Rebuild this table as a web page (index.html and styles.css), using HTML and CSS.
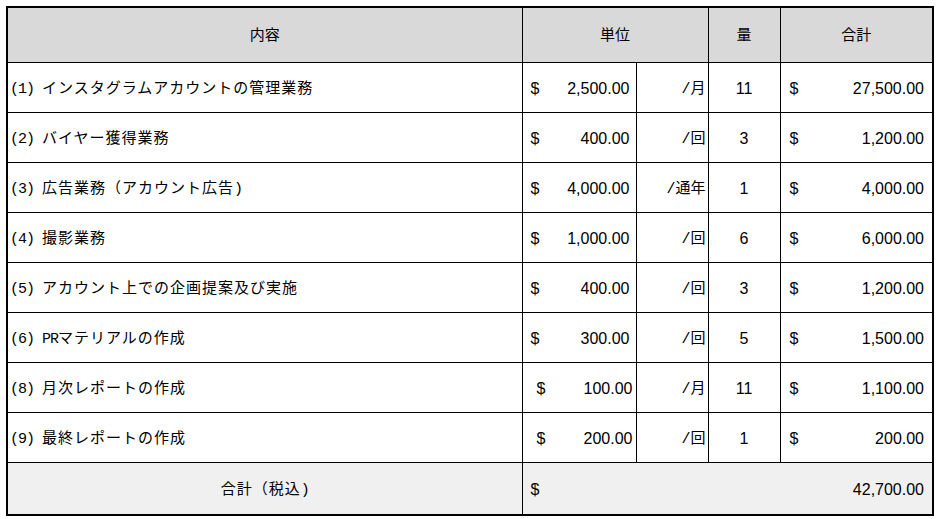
FILE: index.html
```html
<!DOCTYPE html>
<html lang="ja">
<head>
<meta charset="utf-8">
<title>見積</title>
<link rel="stylesheet" href="styles.css">
</head>
<body>
<table class="quote">
  <colgroup>
    <col class="c-item">
    <col class="c-price">
    <col class="c-unit">
    <col class="c-qty">
    <col class="c-total">
  </colgroup>
  <thead>
    <tr class="head">
      <th>内容</th>
      <th colspan="2">単位</th>
      <th>量</th>
      <th>合計</th>
    </tr>
  </thead>
  <tbody>
    <tr>
      <td class="item"><span class="no">(1) </span>インスタグラムアカウントの管理業務</td>
      <td class="money"><span class="cur">$</span><span class="val">2,500.00</span></td>
      <td class="unit"><span class="sl">/</span>月</td>
      <td class="qty">11</td>
      <td class="money total"><span class="cur">$</span><span class="val">27,500.00</span></td>
    </tr>
    <tr>
      <td class="item"><span class="no">(2) </span>バイヤー獲得業務</td>
      <td class="money"><span class="cur">$</span><span class="val">400.00</span></td>
      <td class="unit"><span class="sl">/</span>回</td>
      <td class="qty">3</td>
      <td class="money total"><span class="cur">$</span><span class="val">1,200.00</span></td>
    </tr>
    <tr>
      <td class="item"><span class="no">(3) </span>広告業務（アカウント広告<span class="no">)</span></td>
      <td class="money"><span class="cur">$</span><span class="val">4,000.00</span></td>
      <td class="unit"><span class="sl">/</span>通年</td>
      <td class="qty">1</td>
      <td class="money total"><span class="cur">$</span><span class="val">4,000.00</span></td>
    </tr>
    <tr>
      <td class="item"><span class="no">(4) </span>撮影業務</td>
      <td class="money"><span class="cur">$</span><span class="val">1,000.00</span></td>
      <td class="unit"><span class="sl">/</span>回</td>
      <td class="qty">6</td>
      <td class="money total"><span class="cur">$</span><span class="val">6,000.00</span></td>
    </tr>
    <tr>
      <td class="item"><span class="no">(5) </span>アカウント上での企画提案及び実施</td>
      <td class="money"><span class="cur">$</span><span class="val">400.00</span></td>
      <td class="unit"><span class="sl">/</span>回</td>
      <td class="qty">3</td>
      <td class="money total"><span class="cur">$</span><span class="val">1,200.00</span></td>
    </tr>
    <tr>
      <td class="item"><span class="no">(6) PR</span>マテリアルの作成</td>
      <td class="money"><span class="cur">$</span><span class="val">300.00</span></td>
      <td class="unit"><span class="sl">/</span>回</td>
      <td class="qty">5</td>
      <td class="money total"><span class="cur">$</span><span class="val">1,500.00</span></td>
    </tr>
    <tr>
      <td class="item"><span class="no">(8) </span>月次レポートの作成</td>
      <td class="money inset"><span class="cur">$</span><span class="val">100.00</span></td>
      <td class="unit"><span class="sl">/</span>月</td>
      <td class="qty">11</td>
      <td class="money total"><span class="cur">$</span><span class="val">1,100.00</span></td>
    </tr>
    <tr>
      <td class="item"><span class="no">(9) </span>最終レポートの作成</td>
      <td class="money inset"><span class="cur">$</span><span class="val">200.00</span></td>
      <td class="unit"><span class="sl">/</span>回</td>
      <td class="qty">1</td>
      <td class="money total"><span class="cur">$</span><span class="val">200.00</span></td>
    </tr>
  </tbody>
  <tfoot>
    <tr class="foot">
      <td class="foot-label">合計（税込<span class="no">)</span></td>
      <td class="money grand" colspan="4"><span class="cur">$</span><span class="val">42,700.00</span></td>
    </tr>
  </tfoot>
</table>
</body>
</html>
```
FILE: styles.css
```css
html, body {
  margin: 0;
  padding: 0;
  background: #ffffff;
}

body {
  padding: 6px;
  font-family: "Noto Sans CJK JP", "DejaVu Sans", sans-serif;
  color: #000000;
}

.quote {
  border-collapse: collapse;
  table-layout: fixed;
  width: 926px;
  border: 2px solid #000000;
  font-size: 15px;
}

.c-item { width: 515px; }
.c-price { width: 114px; }
.c-unit { width: 72px; }
.c-qty { width: 72px; }
.c-total { width: 153px; }

.quote th,
.quote td {
  border: 1px solid #000000;
  padding: 0;
  vertical-align: middle;
  line-height: 20px;
  white-space: nowrap;
}

.quote td {
  height: 47px;
  padding-top: 2px;
}

.head th {
  background: #d9d9d9;
  font-weight: normal;
  text-align: center;
  height: 51px;
  padding-bottom: 3px;
}

.item {
  padding-left: 2px !important;
  text-align: left;
  letter-spacing: 1px;
}

.no {
  font-family: "Liberation Mono", "DejaVu Sans Mono", monospace;
  font-size: 15px;
  letter-spacing: -1px;
  white-space: pre;
}

.money {
  font-family: "Liberation Sans", Arial, sans-serif;
  font-size: 16px;
}

.money .cur {
  float: left;
  padding-left: 8px;
}

.money .val {
  float: right;
  padding-right: 6px;
}

.money.inset .cur { padding-left: 14px; }
.money.inset .val { padding-right: 3px; }

.money.total .cur { padding-left: 9px; }
.money.total .val { padding-right: 8px; }

.unit {
  text-align: right;
  padding-right: 2px !important;
}

.sl {
  font-family: "Liberation Mono", "DejaVu Sans Mono", monospace;
  font-size: 15px;
  letter-spacing: -1px;
  padding-right: 1px;
}

.qty {
  text-align: center;
  font-family: "Liberation Sans", Arial, sans-serif;
  font-size: 16px;
}

.quote .foot td {
  background: #f0f0f0;
  height: 49px;
}

.foot-label {
  text-align: center;
  letter-spacing: 1px;
}

.money.grand .cur { padding-left: 8px; }
.money.grand .val { padding-right: 8px; }
```
